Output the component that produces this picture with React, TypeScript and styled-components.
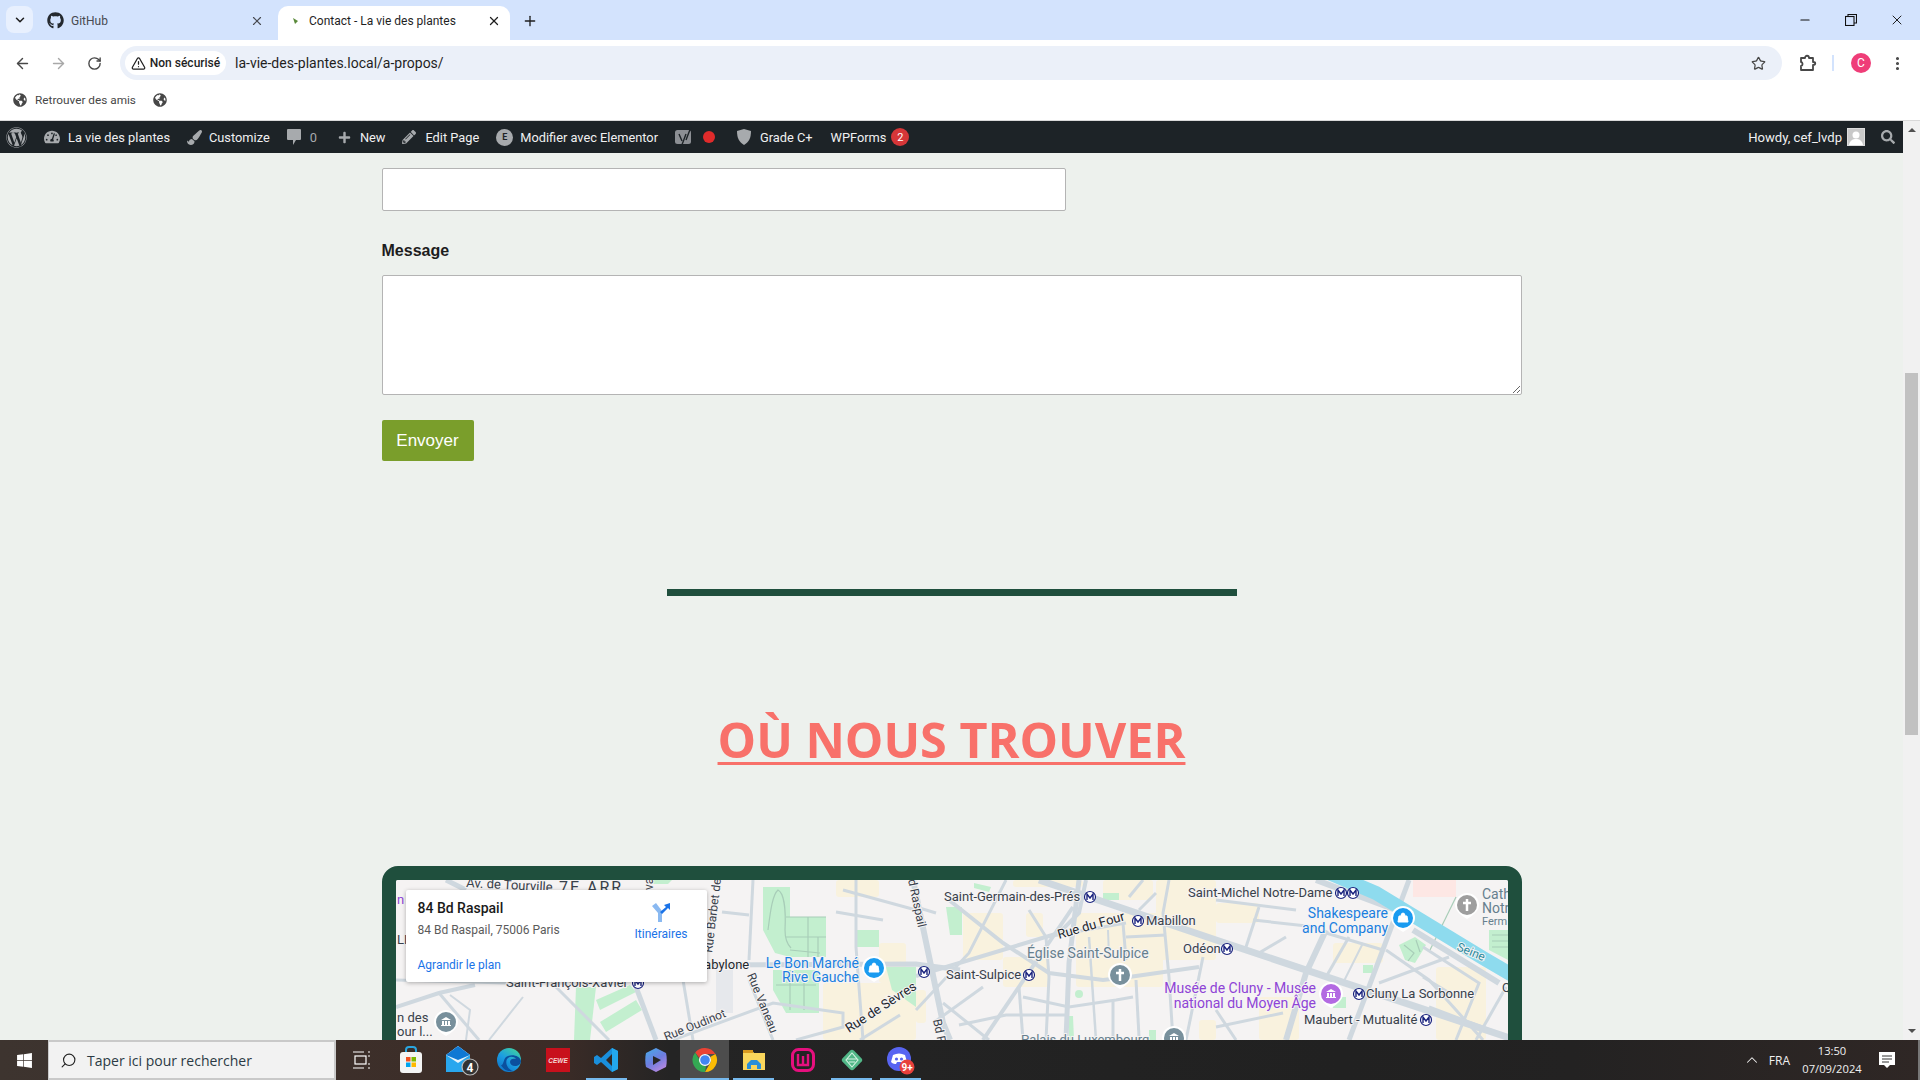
import React from 'react'
import styled, { createGlobalStyle } from 'styled-components'
import { ArrowLeft, ArrowRight, ChevronDown, ChevronUp, EllipsisVertical, Minus, Plus, RotateCw, Search, Star, TriangleAlert, X } from 'lucide-react'
import { FaGithub, FaGlobeAmericas, FaPaintBrush, FaPencilAlt, FaPlus, FaSearch, FaTachometerAlt, FaWindows, FaWordpress } from 'react-icons/fa'

const GlobalStyle = createGlobalStyle`
  html, body {
    margin: 0;
    height: 100%;
    overflow: hidden;
  }
  * {
    box-sizing: border-box;
  }
`

const Screen = styled.div`
  width: 1920px;
  height: 1080px;
  display: flex;
  flex-direction: column;
  overflow: hidden;
  font-family: Roboto, 'Open Sans', sans-serif;
  background: #fff;
`

const TabStrip = styled.div`
  height: 40px;
  flex: none;
  background: #d3e3fd;
  display: flex;
  align-items: flex-end;
  padding-left: 6px;
  color: #1f1f1f;
`

const TabSearch = styled.div`
  width: 27px;
  height: 27px;
  border-radius: 8px;
  background: #e8f0fe;
  display: flex;
  align-items: center;
  justify-content: center;
  align-self: flex-start;
  margin-top: 6px;
`

const Tab = styled.div<{ $active?: boolean; $width: number }>`
  width: ${p => p.$width}px;
  height: 34px;
  display: flex;
  align-items: center;
  padding: 0 ${p => (p.$active ? 9 : 14)}px 5px 14px;
  font-size: 12px;
  border-radius: 10px 10px 0 0;
  background: ${p => (p.$active ? '#fff' : 'transparent')};
  color: ${p => (p.$active ? '#1f1f1f' : '#474a50')};
`

const TabTitle = styled.span<{ $indent: number }>`
  flex: 1;
  margin-left: ${p => p.$indent}px;
  white-space: nowrap;
`

const NewTab = styled.div`
  width: 40px;
  height: 34px;
  display: flex;
  align-items: center;
  justify-content: center;
  padding-bottom: 5px;
`

const WindowControls = styled.div`
  margin-left: auto;
  align-self: flex-start;
  display: flex;
  height: 40px;
  align-items: center;
`

const WindowButton = styled.div`
  width: 46px;
  display: flex;
  justify-content: center;
  color: #111;
`

const Toolbar = styled.div`
  height: 46px;
  flex: none;
  background: #fff;
  border-radius: 8px 8px 0 0;
  display: flex;
  align-items: center;
  color: #474747;
  padding: 0 0 0 4px;
`

const NavButton = styled.div<{ $faded?: boolean }>`
  width: 36px;
  height: 30px;
  display: flex;
  align-items: center;
  justify-content: center;
  color: ${p => (p.$faded ? '#a8a8a8' : '#474747')};
`

const AddressBar = styled.div`
  width: 1662px;
  height: 34px;
  margin-left: 8px;
  border-radius: 17px;
  background: #ebf0f9;
  display: flex;
  align-items: center;
  padding: 0 16px 0 5px;
`

const SecurityChip = styled.div`
  height: 24px;
  width: 101px;
  border-radius: 12px;
  background: #fff;
  display: flex;
  align-items: center;
  justify-content: center;
  gap: 4px;
  font-size: 12px;
  font-weight: 500;
  color: #1f1f1f;
  white-space: nowrap;
`

const UrlText = styled.span`
  margin-left: 9px;
  font-size: 14px;
  color: #1f1f1f;
  flex: 1;
`

const ToolbarEnd = styled.div`
  display: flex;
  align-items: center;
  height: 30px;
  margin-left: 17px;
`

const Divider = styled.div`
  width: 2px;
  height: 16px;
  background: #d3e3fd;
  margin: 0 17px 0 15px;
`

const Avatar = styled.div`
  width: 20px;
  height: 20px;
  border-radius: 50%;
  background: #ef3d78;
  color: #fff;
  font-size: 12px;
  display: flex;
  align-items: center;
  justify-content: center;
  margin-right: 18px;
`

const BookmarksBar = styled.div`
  height: 35px;
  flex: none;
  border-bottom: 1px solid #d9d9d9;
  background: #fff;
  display: flex;
  align-items: center;
  padding: 0 0 6px 13px;
  font-size: 11.8px;
  color: #474747;
`

const Bookmark = styled.div`
  display: flex;
  align-items: center;
  gap: 8px;
  margin-right: 17px;
  color: #474747;
`

const Middle = styled.div`
  flex: 1;
  min-height: 0;
  display: flex;
`

const Site = styled.div`
  flex: 1;
  min-width: 0;
  display: flex;
  flex-direction: column;
`

const AdminBar = styled.div`
  height: 32px;
  flex: none;
  background: #1d2327;
  color: #f0f0f1;
  display: flex;
  align-items: center;
  font-size: 12.8px;
  padding-left: 6px;
`

const AdminItem = styled.div<{ $gap?: number; $pad?: number }>`
  display: flex;
  align-items: center;
  gap: ${p => p.$gap ?? 6}px;
  padding-right: ${p => p.$pad ?? 14}px;
  color: #f0f0f1;
  white-space: nowrap;
  svg {
    color: #a7aaad;
  }
`

const AdminRight = styled.div`
  margin-left: auto;
  display: flex;
  align-items: center;
  gap: 5px;
  padding-right: 8px;
  font-size: 13.1px;
`

const Count = styled.span`
  color: #a7aaad;
`

const ElementorDot = styled.div`
  width: 17px;
  height: 17px;
  border-radius: 50%;
  background: #a7aaad;
  color: #1d2327;
  font-size: 9px;
  font-weight: 700;
  display: flex;
  align-items: center;
  justify-content: center;
`

const RedDot = styled.div`
  width: 12px;
  height: 12px;
  border-radius: 50%;
  background: #e02b2b;
`

const Badge = styled.div`
  width: 18px;
  height: 18px;
  border-radius: 50%;
  background: #d63638;
  color: #fff;
  font-size: 11px;
  display: flex;
  align-items: center;
  justify-content: center;
`

const UserPhoto = styled.div`
  width: 18px;
  height: 18px;
  background: #c9c9c9;
  border: 1px solid #ddd;
  margin-right: 11px;
  overflow: hidden;
`

const Page = styled.main`
  flex: 1;
  min-height: 0;
  overflow: hidden;
  background: #edf1ed;
  padding-top: 15px;
`

const Column = styled.div`
  width: 1140px;
  margin: 0 auto;
  font-family: 'Liberation Sans', Arial, sans-serif;
`

const NameInput = styled.input`
  display: block;
  width: 684px;
  height: 43px;
  border: 1px solid #b4b4b4;
  border-radius: 2px;
  background: #fff;
`

const FieldLabel = styled.label`
  display: block;
  margin-top: 30px;
  font-size: 16px;
  font-weight: 700;
  line-height: 19px;
  color: #1d1d1d;
`

const MessageInput = styled.textarea`
  display: block;
  width: 1140px;
  height: 120px;
  margin-top: 15px;
  border: 1px solid #b4b4b4;
  border-radius: 2px;
  background: #fff;
  outline: none;
`

const SubmitButton = styled.button`
  display: block;
  margin-top: 25px;
  width: 92px;
  height: 41px;
  border: none;
  border-radius: 2px;
  background: #7a9e2b;
  color: #fff;
  font-family: 'Liberation Sans', Arial, sans-serif;
  font-size: 17px;
`

const Rule = styled.hr`
  width: 570px;
  height: 7px;
  margin: 128px auto 0;
  border: none;
  background: #1f4f3d;
`

const Title = styled.h2`
  margin: 109px 0 0;
  height: 68px;
  text-align: center;
  font-family: 'Open Sans', sans-serif;
  font-size: 48.5px;
  line-height: 68px;
  font-weight: 700;
  color: #f8716a;
  text-decoration: underline;
  text-decoration-thickness: 3px;
  text-underline-offset: 4px;
`

const MapFrame = styled.div`
  margin-top: 93px;
  height: 450px;
  border: 14px solid #1f4f3d;
  border-radius: 16px;
  position: relative;
  background: #f5f3f3;
  overflow: hidden;
`

const MapCanvas = styled.svg`
  display: block;
  font-family: Roboto, sans-serif;
  text {
    paint-order: stroke;
    stroke: #f5f3f3;
    stroke-width: 2px;
  }
`

const PlaceCard = styled.div`
  position: absolute;
  left: 10px;
  top: 10px;
  width: 301px;
  height: 92px;
  background: #fff;
  border-radius: 2px;
  box-shadow: 0 1px 4px rgba(0, 0, 0, 0.3);
  font-family: Roboto, sans-serif;
  padding: 10px 12px;
`

const PlaceName = styled.div`
  font-size: 14px;
  font-weight: 500;
  line-height: 17px;
  color: #1a1a1a;
`

const PlaceAddress = styled.div`
  margin-top: 5px;
  font-size: 12px;
  line-height: 16px;
  color: #5b5b5b;
`

const PlaceLink = styled.div`
  margin-top: 20px;
  font-size: 12px;
  line-height: 14px;
  color: #1a73e8;
`

const Directions = styled.div`
  position: absolute;
  right: 19px;
  top: 13px;
  display: flex;
  flex-direction: column;
  align-items: center;
  gap: 5px;
  font-size: 12px;
  color: #1a73e8;
`

const Scrollbar = styled.div`
  width: 17px;
  flex: none;
  background: #f1f1f1;
  display: flex;
  flex-direction: column;
  align-items: center;
  justify-content: space-between;
  position: relative;
  padding: 7px 0;
`

const Arrow = styled.div<{ $down?: boolean }>`
  width: 0;
  height: 0;
  border-left: 4px solid transparent;
  border-right: 4px solid transparent;
  ${p => (p.$down ? 'border-top: 4px solid #505050;' : 'border-bottom: 4px solid #505050;')}
`

const ScrollThumb = styled.div`
  position: absolute;
  left: 2px;
  right: 2px;
  top: 252px;
  height: 362px;
  background: #c1c1c1;
`

const Taskbar = styled.footer`
  height: 40px;
  flex: none;
  display: flex;
  align-items: stretch;
  background: linear-gradient(90deg, #3d342f 0, #3c2c27 29%, #242424 35%, #212121 70%, #232222 82%, #2f2725 100%);
  color: #fff;
  border-right: 2px solid #777;
`

const StartButton = styled.div`
  width: 48px;
  display: flex;
  align-items: center;
  justify-content: center;
`

const SearchBox = styled.div`
  width: 288px;
  background: #f2f2f2;
  border: 2px solid #c9c9c9;
  border-left-width: 1px;
  display: flex;
  align-items: center;
  gap: 10px;
  padding-left: 11px;
  font-family: 'Open Sans', sans-serif;
  font-size: 14px;
  color: #2b3a44;
`

const TaskView = styled.div`
  width: 50px;
  display: flex;
  align-items: center;
  justify-content: center;
`

const AppSlot = styled.div<{ $open?: boolean; $current?: boolean }>`
  width: 49px;
  display: flex;
  align-items: center;
  justify-content: center;
  position: relative;
  background: ${p => (p.$current ? '#4d4d4d' : 'transparent')};
  &::after {
    content: '';
    display: ${p => (p.$open ? 'block' : 'none')};
    position: absolute;
    left: ${p => (p.$current ? 0 : 4)}px;
    right: ${p => (p.$current ? 0 : 4)}px;
    bottom: 0;
    height: 2px;
    background: #76b9ed;
  }
`

const Tray = styled.div`
  margin-left: auto;
  display: flex;
  align-items: center;
  padding-right: 11px;
  font-family: 'Open Sans', sans-serif;
  font-size: 12px;
  color: #f0f0f0;
`

const TrayLang = styled.span`
  margin: 0 7px 0 8px;
`

const Clock = styled.div`
  width: 70px;
  text-align: center;
  font-size: 11.2px;
  line-height: 18px;
`

const Notifications = styled.div`
  width: 40px;
  display: flex;
  justify-content: center;
`

/* map content, all coordinates are page pixels, the viewBox starts at the map corner */
const yellows: [number, number, number, number][] = [
  [823, 983, 93, 57],
  [879, 943, 27, 40],
  [836, 880, 43, 17],
  [963, 913, 40, 47],
  [1013, 880, 70, 7],
  [1026, 913, 17, 24],
  [1003, 957, 46, 30],
  [1076, 913, 87, 74],
  [1103, 880, 50, 20],
  [1156, 880, 60, 80],
  [1199, 1020, 17, 20],
  [1216, 903, 43, 20],
  [1333, 943, 50, 20],
  [1436, 967, 50, 73],
  [1259, 997, 40, 43],
  [916, 990, 10, 33],
]

const greens: string[] = [
  '763,887 790,887 790,917 826,917 826,957 790,957 775,953 763,930',
  '773,970 819,970 819,1013 786,1013 773,990',
  '856,930 879,930 879,947 856,947',
  '886,967 916,967 916,1007 892,990',
  '576,987 596,987 590,1040 574,1040',
  '596,1000 630,985 636,992 600,1010',
  '600,1022 636,1000 642,1010 606,1032',
  '946,907 962,907 962,935 950,935',
  '974,883 991,887 989,892 974,888',
  '1103,893 1119,893 1119,900 1103,900',
  '1399,945 1415,937 1426,945 1415,963 1405,960',
  '1363,965 1373,965 1373,973 1363,973',
  '1489,930 1508,930 1508,960 1489,950',
  '1333,997 1346,997 1346,1008 1333,1008',
  '1069,1016 1073,1016 1074,1040 1069,1040',
  '1149,1030 1156,1030 1156,1040 1149,1040',
  '645,880 672,880 668,884 650,884',
]

const parkPaths = [
  'M768 930c2-15 4-35 10-40c6 3 8 20 7 40c0 10 3 15 6 18',
  'M786 917h40M786 937h40M808 917v40M818 937v20M790 950l30 3',
  'M776 985h40M790 970v40M804 980v30',
  'M1404 945l10 8l-6 8M1416 940l4 12',
  'M1492 935h16M1492 941h16M1492 947h16',
  'M1456 897l-26 53',
]

const roads: [string, number][] = [
  ['1039,880 1216,940 1516,1040', 7],
  ['913,880 943,1023 950,1040', 6],
  ['753,880 749,960', 3],
  ['856,880 856,947 863,1040', 3],
  ['700,965 916,964 960,970', 5],
  ['749,980 773,1040', 3],
  ['673,1040 773,1003 843,1013 843,1027 796,1040', 3],
  ['683,980 693,1040', 3],
  ['636,987 656,1040', 5],
  ['556,987 609,1040', 3],
  ['396,980 506,983', 3],
  ['396,1007 439,993 475,985', 4],
  ['439,993 479,1040', 3],
  ['450,995 470,1010 466,1040', 2],
  ['523,997 489,1040', 2],
  ['446,880 466,890', 5],
  ['843,890 916,910', 3],
  ['836,912 883,920', 3],
  ['722,912 749,915', 3],
  ['900,1015 860,1040', 3],
  ['916,976 1059,933 1079,913 1086,880', 4],
  ['1046,937 1126,923', 3],
  ['1006,880 969,953 916,1010', 3],
  ['949,900 1003,943 1049,973 1103,980 1129,977 1199,967', 4],
  ['1079,880 1069,963 1066,1040', 5],
  ['1073,907 983,1040', 4],
  ['1029,910 1046,937 1049,977 1046,1040', 3],
  ['1019,987 1023,1040', 3],
  ['1023,997 1069,1007 1116,1000 1133,997', 3],
  ['959,1025 1006,1015 1066,1015', 3],
  ['1089,937 1096,1040', 2.5],
  ['1113,1000 1113,1040', 3],
  ['1136,980 1139,1037', 3],
  ['1123,923 1126,960', 3],
  ['1126,937 1166,935', 3],
  ['1108,930 1109,957', 2],
  ['1169,880 1163,913 1169,977 1173,1040', 3],
  ['1203,957 1186,1040', 3],
  ['1143,880 1129,897', 3],
  ['1156,893 1139,910', 3],
  ['943,1003 989,1040', 3],
  ['983,987 933,1023', 3],
  ['916,907 936,913', 3],
  ['1316,880 1396,910', 6],
  ['1413,930 1499,983', 6],
  ['1409,880 1349,1040', 5],
  ['1326,930 1306,973 1286,1040', 6],
  ['1259,907 1246,947', 3],
  ['1216,900 1296,910', 3],
  ['1253,920 1316,927', 3],
  ['1326,933 1383,950', 3],
  ['1349,937 1326,977', 3],
  ['1363,943 1343,983', 2],
  ['1386,950 1429,980 1483,1040', 3],
  ['1423,947 1479,983 1456,1040', 3],
  ['1379,983 1449,957', 3],
  ['1423,977 1456,997', 3],
  ['1506,987 1476,1040', 3],
  ['1429,1007 1509,1037', 3],
  ['1216,1027 1283,1013', 3],
  ['1216,1010 1236,1040', 3],
  ['1259,953 1286,937', 3],
]

type MapLabel = {
  x: number
  y: number
  text: string
  color?: string
  size?: number
  end?: boolean
  rotate?: number
  spacing?: number
}

const DARK = '#39414b'
const INK = '#23272d'
const BLUE = '#1a7fe0'
const PURPLE = '#8e44d6'
const SLATE = '#667f8e'

const labels: MapLabel[] = [
  { x: 466, y: 887, text: 'Av. de Tourville', rotate: 3 },
  { x: 559, y: 893, text: '7E ARR', size: 16, spacing: 2 },
  { x: 506, y: 987, text: 'Saint-François-Xavier' },
  { x: 696, y: 969, text: 'Babylone', color: INK },
  { x: 859, y: 968, text: 'Le Bon Marché', size: 14, color: BLUE, end: true },
  { x: 859, y: 982, text: 'Rive Gauche', size: 14, color: BLUE, end: true },
  { x: 946, y: 979, text: 'Saint-Sulpice' },
  { x: 944, y: 901, text: 'Saint-Germain-des-Prés' },
  { x: 1188, y: 897, text: 'Saint-Michel Notre-Dame' },
  { x: 1388, y: 918, text: 'Shakespeare', size: 14, color: BLUE, end: true },
  { x: 1388, y: 933, text: 'and Company', size: 14, color: BLUE, end: true },
  { x: 1146, y: 925, text: 'Mabillon' },
  { x: 1027, y: 958, text: 'Église Saint-Sulpice', size: 14, color: SLATE },
  { x: 1183, y: 953, text: 'Odéon' },
  { x: 1316, y: 993, text: 'Musée de Cluny - Musée', size: 14, color: PURPLE, end: true },
  { x: 1316, y: 1008, text: 'national du Moyen Âge', size: 14, color: PURPLE, end: true },
  { x: 1366, y: 998, text: 'Cluny La Sorbonne' },
  { x: 1304, y: 1024, text: 'Maubert - Mutualité' },
  { x: 1021, y: 1044, text: 'Palais du Luxembourg', color: SLATE },
  { x: 1482, y: 899, text: 'Cath', color: SLATE, size: 14 },
  { x: 1482, y: 913, text: 'Notr', color: SLATE, size: 14 },
  { x: 1482, y: 925, text: 'Ferm', size: 11, color: SLATE },
  { x: 397, y: 1022, text: 'n des' },
  { x: 397, y: 1036, text: 'our l...' },
  { x: 1502, y: 992, text: 'Q' },
  { x: 397, y: 944, text: 'LI' },
  { x: 397, y: 904, text: 'n', color: PURPLE },
  { x: 1059, y: 939, text: 'Rue du Four', color: INK, rotate: -16 },
  { x: 849, y: 1033, text: 'Rue de Sèvres', color: INK, rotate: -33 },
  { x: 666, y: 1041, text: 'Rue Oudinot', size: 12, rotate: -22 },
  { x: 1456, y: 950, text: 'Seine', size: 12, color: '#2a8a9e', rotate: 22 },
  { x: 908, y: 880, text: 'd Raspail', size: 12, rotate: 78 },
  { x: 933, y: 1020, text: 'Bd R', size: 12, rotate: 78 },
  { x: 747, y: 975, text: 'Rue Vaneau', size: 12, rotate: 68 },
  { x: 712, y: 953, text: 'Rue Barbet de', size: 12, rotate: -83 },
  { x: 653, y: 890, text: 'va', size: 12, rotate: -90 },
]

const metros: [number, number][] = [
  [924, 972],
  [1029, 975],
  [1090, 897],
  [1341, 893],
  [1353, 893],
  [1138, 921],
  [1227, 949],
  [1359, 994],
  [1426, 1020],
  [638, 983],
]

const pins: { x: number; y: number; color: string; glyph: string }[] = [
  { x: 874, y: 968, color: '#1a9bf0', glyph: 'bag' },
  { x: 1403, y: 918, color: '#1a9bf0', glyph: 'bag' },
  { x: 1120, y: 975, color: '#78909c', glyph: 'cross' },
  { x: 1467, y: 905, color: '#9e9e9e', glyph: 'cross' },
  { x: 1331, y: 994, color: '#b36ae2', glyph: 'museum' },
  { x: 1174, y: 1038, color: '#78909c', glyph: 'museum' },
  { x: 446, y: 1022, color: '#78909c', glyph: 'museum' },
]

const MapPin = ({ x, y, color, glyph }: { x: number; y: number; color: string; glyph: string }) => (
  <g transform={`translate(${x} ${y})`}>
    <path d="M-12 0a12 12 0 1 1 24 0c0 5-4 9-12 14c-8-5-12-9-12-14z" fill="#fff" />
    <circle r="10" fill={color} />
    {glyph === 'bag' && <path d="M-4-2h8l1 6h-10zM-2-2a2 3 0 0 1 4 0" fill="#fff" stroke="#fff" strokeWidth="1" />}
    {glyph === 'cross' && <path d="M0-6v12M-4-2h8" stroke="#fff" strokeWidth="2.5" />}
    {glyph === 'museum' && <path d="M-5-2l5-3 5 3zM-4-1h2v4h-2zM-1-1h2v4h-2zM2-1h2v4h-2zM-5 3h10v1h-10z" fill="#fff" />}
  </g>
)

const Metro = ({ x, y }: { x: number; y: number }) => (
  <g transform={`translate(${x} ${y})`}>
    <circle r="5.5" fill="#fff" stroke="#1a237e" strokeWidth="1.2" />
    <path d="M-3 3v-6l3 4 3-4v6" fill="none" stroke="#1a237e" strokeWidth="1.4" />
  </g>
)

const MapDrawing = () => (
  <MapCanvas width={1112} height={422} viewBox="396 880 1112 422">
    <rect x="396" y="880" width="1112" height="422" fill="#f5f3f3" />
    <rect x="1413" y="880" width="43" height="17" fill="#fde7e4" />
    <rect x="716" y="970" width="17" height="43" fill="#e6e8ec" />
    {yellows.map(([x, y, w, h]) => (
      <rect key={`${x}-${y}`} x={x} y={y} width={w} height={h} rx="3" fill="#f9f2de" />
    ))}
    {greens.map(p => (
      <polygon key={p} points={p} fill="#c3efcf" />
    ))}
    <circle cx="1079" cy="994" r="4" fill="#c3efcf" />
    {parkPaths.map(d => (
      <path key={d} d={d} fill="none" stroke="#a8cdb8" strokeWidth="1.2" />
    ))}
    {roads.map(([p, w]) => (
      <polyline key={p} points={p} fill="none" stroke="#cfd8df" strokeWidth={w} />
    ))}
    <polyline points="1329,873 1376,893 1483,958 1512,975" fill="none" stroke="#8edbee" strokeWidth="14" />
    {labels.map(l => (
      <text
        key={l.text}
        x={l.x}
        y={l.y}
        fontSize={l.size ?? 13}
        letterSpacing={l.spacing}
        fill={l.color ?? DARK}
        textAnchor={l.end ? 'end' : 'start'}
        transform={l.rotate ? `rotate(${l.rotate} ${l.x} ${l.y})` : undefined}
      >
        {l.text}
      </text>
    ))}
    {metros.map(([x, y]) => (
      <Metro key={`${x}-${y}`} x={x} y={y} />
    ))}
    {pins.map(p => (
      <MapPin key={`${p.x}-${p.y}`} {...p} />
    ))}
  </MapCanvas>
)

const StoreIcon = () => (
  <svg width="24" height="28" viewBox="0 0 24 28">
    <path d="M7 7V4a3 3 0 0 1 3-3h4a3 3 0 0 1 3 3v3" fill="none" stroke="#2aa6e0" strokeWidth="2" />
    <rect x="1" y="6" width="22" height="21" rx="3" fill="#f4f4f4" />
    <rect x="7" y="11" width="4.5" height="4.5" fill="#f25022" />
    <rect x="12.5" y="11" width="4.5" height="4.5" fill="#7fba00" />
    <rect x="7" y="16.5" width="4.5" height="4.5" fill="#00a4ef" />
    <rect x="12.5" y="16.5" width="4.5" height="4.5" fill="#ffb900" />
  </svg>
)

const MailIcon = () => (
  <svg width="38" height="32" viewBox="-4 0 38 32">
    <path d="M1 11L13 2l12 9v17H1z" fill="#29a7ee" />
    <path d="M1 11L13 2l12 9-12 8z" fill="#e9f4fb" />
    <path d="M1 11L13 2l12 9-12 5z" fill="#0f78d4" />
    <circle cx="25" cy="23" r="8" fill="#333" stroke="#bbb" strokeWidth="1.2" />
    <text x="25" y="27.5" fontSize="12" fontFamily="Roboto" fontWeight="700" fill="#fff" textAnchor="middle">
      4
    </text>
  </svg>
)

const EdgeIcon = () => (
  <svg width="26" height="26" viewBox="0 0 26 26">
    <defs>
      <linearGradient id="edgeFill" x1="0.8" y1="0" x2="0.1" y2="1">
        <stop offset="0" stopColor="#3fd0a0" />
        <stop offset="0.5" stopColor="#1b9de2" />
        <stop offset="1" stopColor="#0d6ec4" />
      </linearGradient>
    </defs>
    <circle cx="13" cy="13" r="12" fill="url(#edgeFill)" />
    <path d="M25 14c0 3-3 5-6 5s-5-2-5-4c0-3 3-4 6-3-2-3-7-3-9 0-2 4 0 10 6 12-6 1-10-2-12-6 3 1 2-8 7-9 5-2 12 0 13 5z" fill="#0b4f9e" />
  </svg>
)

const CeweIcon = () => (
  <svg width="24" height="24" viewBox="0 0 24 24">
    <rect width="24" height="24" fill="#c8101c" />
    <text x="12" y="14.5" fontSize="6.5" fontFamily="Liberation Sans" fontWeight="700" fontStyle="italic" fill="#f5d5d5" textAnchor="middle">
      CEWE
    </text>
  </svg>
)

const VsCodeIcon = () => (
  <svg width="25" height="26" viewBox="0 0 25 26">
    <path d="M18 1l6 3v18l-6 3L7 15l-4 3-3-2v-6l3-2 4 3zM18 7l-6 6 6 6z" fill="#1a8fdc" fillRule="evenodd" />
    <path d="M18 1l6 3v18l-6 3z" fill="#23a8ee" />
  </svg>
)

const CopilotIcon = () => (
  <svg width="22" height="24" viewBox="0 0 22 24">
    <defs>
      <linearGradient id="copilotFill" x1="0.2" y1="0" x2="0.8" y2="1">
        <stop offset="0" stopColor="#4aa6e8" />
        <stop offset="0.5" stopColor="#6e7de0" />
        <stop offset="1" stopColor="#c08ae0" />
      </linearGradient>
    </defs>
    <path d="M11 0l10 5c1 4 1 10 0 14l-10 5-10-5C0 15 0 9 1 5z" fill="url(#copilotFill)" />
    <path d="M8 8l8 4-8 5z" fill="#262626" />
  </svg>
)

const ChromeIcon = () => (
  <svg width="26" height="26" viewBox="0 0 26 26">
    <path d="M13 1a12 12 0 0 1 10.4 6H13a6 6 0 0 0-5.6 3.9L3.2 5.5A12 12 0 0 1 13 1z" fill="#ea4335" />
    <path d="M23.4 7A12 12 0 0 1 13 25l5.2-9A6 6 0 0 0 18.2 10z" fill="#fbbc05" />
    <path d="M13 25A12 12 0 0 1 3.2 5.5l5.2 9a6 6 0 0 0 5.6 4.4z" fill="#34a853" />
    <circle cx="13" cy="13" r="5.4" fill="#4285f4" stroke="#fff" strokeWidth="1.2" />
  </svg>
)

const FolderIcon = () => (
  <svg width="24" height="22" viewBox="0 0 24 22">
    <path d="M1 1h9l2 3h11v17H1z" fill="#f9d65c" />
    <rect x="1" y="1" width="10" height="3" fill="#d99a1f" />
    <path d="M5 20v-5l4-4h6l4 4v5h-4v-4H9v4z" fill="#2a8fd8" />
  </svg>
)

const WampIcon = () => (
  <svg width="24" height="24" viewBox="0 0 24 24">
    <rect x="1.5" y="1.5" width="21" height="21" rx="6" fill="none" stroke="#e6107e" strokeWidth="3" />
    <path d="M7 6v11h10V6M12 8v9" fill="none" stroke="#e6107e" strokeWidth="2.4" />
  </svg>
)

const GemIcon = () => (
  <svg width="24" height="24" viewBox="0 0 24 24">
    <rect x="4" y="4" width="16" height="16" rx="3" fill="#52b788" transform="rotate(45 12 12)" />
    <path d="M12 5l6 7-6 7-6-7zM7 11h10M9 14h6" fill="none" stroke="#d8f3e4" strokeWidth="1.1" />
  </svg>
)

const DiscordIcon = () => (
  <svg width="30" height="30" viewBox="0 0 30 30">
    <circle cx="13" cy="14" r="12" fill="#5865f2" />
    <path d="M7 10c4-2 8-2 12 0l2 7c-2 2-4 2-5 2l-1-2h-4l-1 2c-1 0-3 0-5-2z" fill="#fff" />
    <circle cx="10.5" cy="14" r="1.6" fill="#5865f2" />
    <circle cx="15.5" cy="14" r="1.6" fill="#5865f2" />
    <circle cx="21" cy="22" r="7.5" fill="#e8403c" />
    <text x="21" y="25.5" fontSize="10" fontFamily="Roboto" fontWeight="700" fill="#fff" textAnchor="middle">
      9+
    </text>
  </svg>
)

const TaskViewIcon = () => (
  <svg width="18" height="18" viewBox="0 0 18 18" fill="none" stroke="#fff" strokeWidth="1.2">
    <rect x="3" y="5" width="11" height="8" />
    <path d="M1 1h11M1 17h11M16 1h2M16 5h2M16 13h2M16 17h2" />
  </svg>
)

const DirectionsIcon = () => (
  <svg width="18" height="19" viewBox="0 0 18 19">
    <path d="M0 3l4-3 6 8v11H6V10z" fill="#8ab9f1" />
    <path d="M8 9l6-5-2-2 6-2v7l-2-2-6 6z" fill="#1a73e8" />
  </svg>
)

const PersonIcon = () => (
  <svg width="16" height="16" viewBox="0 0 16 16">
    <circle cx="8" cy="6" r="3.5" fill="#fff" />
    <path d="M1 16c1-5 4-6 7-6s6 1 7 6z" fill="#fff" />
  </svg>
)

const ShieldIcon = () => (
  <svg width="14" height="16" viewBox="0 0 14 16">
    <path d="M7 0l7 2c0 7-2 11-7 14C2 13 0 9 0 2z" fill="#a7aaad" />
  </svg>
)

const BubbleIcon = () => (
  <svg width="14" height="16" viewBox="0 0 14 16">
    <path d="M1 0h12a1 1 0 0 1 1 1v9a1 1 0 0 1-1 1H9l-3 5v-5H1a1 1 0 0 1-1-1V1a1 1 0 0 1 1-1z" fill="#a7aaad" />
  </svg>
)

const YoastIcon = () => (
  <svg width="18" height="20" viewBox="0 0 18 20">
    <rect y="3" width="16" height="14" rx="2.5" fill="#8c8f94" />
    <path d="M4 7l3 7M11 7L6.5 19M16 0l-5 13" stroke="#1d2327" strokeWidth="1.4" fill="none" />
  </svg>
)

const ExtensionIcon = () => (
  <svg width="18" height="18" viewBox="0 0 18 18" fill="none" stroke="#474747" strokeWidth="1.8" strokeLinejoin="round">
    <path d="M2 4h4c0-3 4-3 4 0h4v4c3 0 3 3 0 3v5H2v-4c2 0 2-4 0-4z" />
  </svg>
)

const RestoreIcon = () => (
  <svg width="12" height="12" viewBox="0 0 12 12" fill="none" stroke="#111" strokeWidth="1.1">
    <rect x="0.5" y="2.5" width="8.5" height="9" />
    <path d="M3 2.5V0.5h8.5V9H9" />
  </svg>
)

const SmallFavicon = () => (
  <svg width="8" height="8" viewBox="0 0 8 8">
    <path d="M1 1l5 3-3 3z" fill="#5a8a3a" />
  </svg>
)

export default function App() {
  return (
    <Screen>
      <GlobalStyle />
      <TabStrip>
        <TabSearch>
          <ChevronDown size={14} strokeWidth={2.6} />
        </TabSearch>
        <Tab $width={245}>
          <FaGithub size={17} color="#24292f" />
          <TabTitle $indent={7}>GitHub</TabTitle>
          <X size={14} strokeWidth={2} />
        </Tab>
        <Tab $active $width={232}>
          <SmallFavicon />
          <TabTitle $indent={9}>Contact - La vie des plantes</TabTitle>
          <X size={14} strokeWidth={2.2} />
        </Tab>
        <NewTab>
          <Plus size={16} strokeWidth={2} />
        </NewTab>
        <WindowControls>
          <WindowButton>
            <Minus size={14} />
          </WindowButton>
          <WindowButton>
            <RestoreIcon />
          </WindowButton>
          <WindowButton>
            <X size={16} strokeWidth={1.4} />
          </WindowButton>
        </WindowControls>
      </TabStrip>
      <Toolbar>
        <NavButton>
          <ArrowLeft size={17} />
        </NavButton>
        <NavButton $faded>
          <ArrowRight size={17} />
        </NavButton>
        <NavButton>
          <RotateCw size={15} strokeWidth={2.2} />
        </NavButton>
        <AddressBar>
          <SecurityChip>
            <TriangleAlert size={15} />
            Non sécurisé
          </SecurityChip>
          <UrlText>la-vie-des-plantes.local/a-propos/</UrlText>
          <Star size={15} strokeWidth={2} />
        </AddressBar>
        <ToolbarEnd>
          <ExtensionIcon />
          <Divider />
          <Avatar>C</Avatar>
          <EllipsisVertical size={17} strokeWidth={2.4} />
        </ToolbarEnd>
      </Toolbar>
      <BookmarksBar>
        <Bookmark>
          <FaGlobeAmericas size={14} />
          Retrouver des amis
        </Bookmark>
        <Bookmark>
          <FaGlobeAmericas size={14} />
        </Bookmark>
      </BookmarksBar>
      <Middle>
        <Site>
          <AdminBar>
            <AdminItem $pad={17}>
              <FaWordpress size={21} />
            </AdminItem>
            <AdminItem $gap={8} $pad={17}>
              <FaTachometerAlt size={16} />
              La vie des plantes
            </AdminItem>
            <AdminItem $gap={7} $pad={17}>
              <FaPaintBrush size={15} />
              Customize
            </AdminItem>
            <AdminItem $gap={9} $pad={21}>
              <BubbleIcon />
              <Count>0</Count>
            </AdminItem>
            <AdminItem $gap={9} $pad={17}>
              <FaPlus size={13} />
              New
            </AdminItem>
            <AdminItem $gap={9} $pad={17}>
              <FaPencilAlt size={14} />
              Edit Page
            </AdminItem>
            <AdminItem $gap={7} $pad={17}>
              <ElementorDot>E</ElementorDot>
              Modifier avec Elementor
            </AdminItem>
            <AdminItem $gap={10} $pad={22}>
              <YoastIcon />
              <RedDot />
            </AdminItem>
            <AdminItem $gap={9} $pad={18}>
              <ShieldIcon />
              Grade C+
            </AdminItem>
            <AdminItem $gap={5}>
              WPForms
              <Badge>2</Badge>
            </AdminItem>
            <AdminRight>
              Howdy, cef_lvdp
              <UserPhoto>
                <PersonIcon />
              </UserPhoto>
              <FaSearch size={14} color="#a7aaad" />
            </AdminRight>
          </AdminBar>
          <Page>
            <Column>
              <NameInput />
              <FieldLabel>Message</FieldLabel>
              <MessageInput />
              <SubmitButton>Envoyer</SubmitButton>
              <Rule />
              <Title>OÙ NOUS TROUVER</Title>
              <MapFrame>
                <MapDrawing />
                <PlaceCard>
                  <PlaceName>84 Bd Raspail</PlaceName>
                  <PlaceAddress>84 Bd Raspail, 75006 Paris</PlaceAddress>
                  <PlaceLink>Agrandir le plan</PlaceLink>
                  <Directions>
                    <DirectionsIcon />
                    Itinéraires
                  </Directions>
                </PlaceCard>
              </MapFrame>
            </Column>
          </Page>
        </Site>
        <Scrollbar>
          <Arrow />
          <ScrollThumb />
          <Arrow $down />
        </Scrollbar>
      </Middle>
      <Taskbar>
        <StartButton>
          <FaWindows size={17} />
        </StartButton>
        <SearchBox>
          <Search size={17} color="#222" strokeWidth={1.6} style={{ transform: 'scaleX(-1)' }} />
          Taper ici pour rechercher
        </SearchBox>
        <TaskView>
          <TaskViewIcon />
        </TaskView>
        <AppSlot>
          <StoreIcon />
        </AppSlot>
        <AppSlot>
          <MailIcon />
        </AppSlot>
        <AppSlot>
          <EdgeIcon />
        </AppSlot>
        <AppSlot>
          <CeweIcon />
        </AppSlot>
        <AppSlot $open>
          <VsCodeIcon />
        </AppSlot>
        <AppSlot>
          <CopilotIcon />
        </AppSlot>
        <AppSlot $open $current>
          <ChromeIcon />
        </AppSlot>
        <AppSlot $open>
          <FolderIcon />
        </AppSlot>
        <AppSlot>
          <WampIcon />
        </AppSlot>
        <AppSlot $open>
          <GemIcon />
        </AppSlot>
        <AppSlot $open>
          <DiscordIcon />
        </AppSlot>
        <Tray>
          <ChevronUp size={18} strokeWidth={1.4} />
          <TrayLang>FRA</TrayLang>
          <Clock>
            13:50
            <br />
            07/09/2024
          </Clock>
          <Notifications>
            <svg width="16" height="16" viewBox="0 0 16 16">
              <path d="M0 0h16v13h-5l-3 3-3-3H0z" fill="#fff" />
              <path d="M3 4h10M3 7h10M3 10h7" stroke="#333" strokeWidth="1" />
            </svg>
          </Notifications>
        </Tray>
      </Taskbar>
    </Screen>
  )
}
